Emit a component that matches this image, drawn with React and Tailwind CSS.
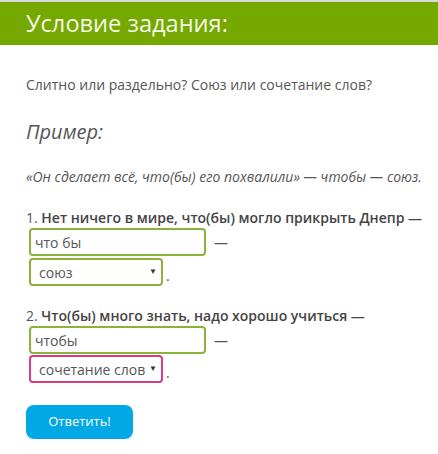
import React from "react";

function Select({ value, pink }) {
  return (
    <div
      className={
        "relative inline-flex items-center h-[28px] w-[134px] rounded-[4px] border-2 bg-white pl-[8px] text-[14px] text-[#555] " +
        (pink ? "border-[#d63c7e]" : "border-[#8ab33c]")
      }
    >
      <span>{value}</span>
      <span className="absolute right-[4px] top-[5px] text-[8px] text-[#333]">▼</span>
    </div>
  );
}

function Input({ value }) {
  return (
    <div className="inline-flex items-center h-[28px] w-[177px] rounded-[4px] border-2 border-[#8ab33c] bg-white pl-[4px] text-[14px] text-[#555]">
      {value}
    </div>
  );
}

export default function App() {
  return (
    <div
      className="w-[438px] h-[454px] bg-white text-[#555]"
      style={{ fontFamily: '"Open Sans", "Noto Sans", sans-serif' }}
    >
      <div className="h-[2px] bg-[#d8d8d8]" />
      <div className="h-[43px] bg-[#75a800] pl-[26px] flex items-center">
        <span className="text-[23.6px] text-[#f4f8e6] leading-none">Условие задания:</span>
      </div>
      <div className="pl-[26px]">
        <p className="mt-[30px] text-[14px] leading-[20px]">
          Слитно или раздельно? Союз или сочетание слов?
        </p>
        <p className="mt-[24px] text-[20px] italic leading-[26px] text-[#555]">Пример:</p>
        <p className="mt-[22px] text-[14px] italic leading-[20px]">
          «Он сделает всё, что(бы) его похвалили» — чтобы — союз.
        </p>
        <p className="mt-[21px] text-[14px] leading-[20px] text-[#555]">
          1. <span className="font-semibold text-[#444]">Нет ничего в мире, что(бы) могло прикрыть Днепр —</span>
        </p>
        <div className="ml-[3px] flex items-center">
          <Input value="что бы" />
          <span className="ml-[8px] text-[14px]">—</span>
        </div>
        <div className="ml-[3px] mt-[2px] flex items-end">
          <Select value="союз" />
          <span className="ml-[3px] text-[14px] leading-[20px]">.</span>
        </div>
        <p className="mt-[20px] text-[14px] leading-[20px] text-[#555]">
          2. <span className="font-semibold text-[#444]">Что(бы) много знать, надо хорошо учиться —</span>
        </p>
        <div className="ml-[3px] flex items-center">
          <Input value="чтобы" />
          <span className="ml-[8px] text-[14px]">—</span>
        </div>
        <div className="ml-[3px] mt-[1px] flex items-end">
          <Select value="сочетание слов" pink />
          <span className="ml-[3px] text-[14px] leading-[20px]">.</span>
        </div>
        <button className="mt-[22px] h-[34px] w-[107px] rounded-[8px] bg-[#00a8e6] text-[13px] text-white">
          Ответить!
        </button>
      </div>
    </div>
  );
}
